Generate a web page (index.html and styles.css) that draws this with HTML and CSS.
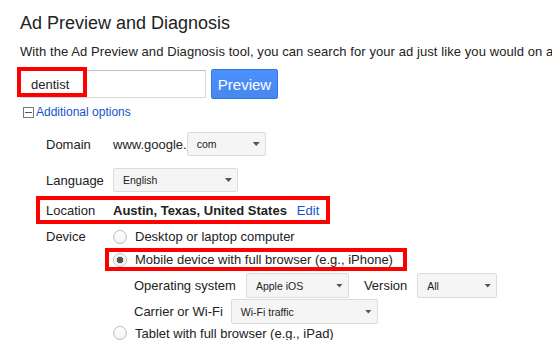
FILE: index.html
```html
<!DOCTYPE html>
<html lang="en">
<head>
<meta charset="utf-8">
<title>Ad Preview and Diagnosis</title>
<link rel="stylesheet" href="styles.css">
</head>
<body>
<div class="page">
  <h1 class="title">Ad Preview and Diagnosis</h1>
  <p class="intro">With the Ad Preview and Diagnosis tool, you can search for your ad just like you would on a</p>
  <div class="search">
    <div class="field">
      <input class="query" type="text" value="dentist">
      <span class="mark mark-query"></span>
    </div>
    <button class="btn" type="button">Preview</button>
  </div>
  <div class="toggle">
    <svg class="minus" width="11" height="11" viewBox="0 0 11 11"><rect x="0.5" y="0.5" width="10" height="10" fill="#fff" stroke="#777"/><line x1="2" y1="5.5" x2="9" y2="5.5" stroke="#555"/></svg>
    <a class="link" href="#">Additional options</a>
  </div>
  <div class="options">
    <div class="row r-domain">
      <span class="label">Domain</span>
      <span class="prefix">www.google.</span>
      <span class="sel w-com">com<i class="caret"></i></span>
    </div>
    <div class="row r-lang">
      <span class="label">Language</span>
      <span class="sel w-lang">English<i class="caret"></i></span>
    </div>
    <div class="row r-loc">
      <span class="label">Location</span>
      <span class="place">Austin, Texas, United States</span>
      <a class="link edit" href="#">Edit</a>
    </div>
    <div class="row r-device">
      <span class="label dlabel">Device</span>
      <div class="group">
        <label class="opt"><input class="radio" type="radio" name="dev"><span>Desktop or laptop computer</span></label>
        <label class="opt opt-mobile"><input class="radio" type="radio" name="dev" checked><span>Mobile device with full browser (e.g., iPhone)</span></label>
        <div class="sub sub-os">
          <span class="slabel">Operating system</span>
          <span class="sel w-os">Apple iOS<i class="caret"></i></span>
          <span class="slabel ver">Version</span>
          <span class="sel w-ver">All<i class="caret"></i></span>
        </div>
        <div class="sub sub-carrier">
          <span class="slabel carrier">Carrier or Wi-Fi</span>
          <span class="sel w-carrier">Wi-Fi traffic<i class="caret"></i></span>
        </div>
        <label class="opt opt-tablet"><input class="radio" type="radio" name="dev"><span>Tablet with full browser (e.g., iPad)</span></label>
      </div>
    </div>
  </div>
</div>
</body>
</html>
```
FILE: styles.css
```css
body {
  margin: 0;
  font-family: "Liberation Sans", Arial, sans-serif;
  color: #222;
  background: #fff;
  overflow: hidden;
}
.page {
  padding-left: 20px;
  white-space: nowrap;
}
.title {
  margin: 12px 0 0;
  font-size: 18px;
  line-height: 22px;
  font-weight: normal;
  color: #222;
}
.intro {
  margin: 10px 0 0;
  font-size: 13px;
  line-height: 16px;
  letter-spacing: 0.08px;
}
.search {
  display: flex;
  align-items: center;
  gap: 5px;
  margin-top: 9px;
  height: 30px;
}
.field {
  position: relative;
  height: 28px;
}
.query {
  box-sizing: border-box;
  width: 186px;
  height: 28px;
  margin: 0;
  border: 1px solid #d9d9d9;
  border-top-color: #c0c0c0;
  padding: 0 0 0 10px;
  font: 13px "Liberation Sans", Arial, sans-serif;
  color: #222;
  outline: none;
}
.mark {
  position: absolute;
  box-sizing: border-box;
  border: 4px solid #f00;
}
.mark-query {
  left: -3px;
  top: -3px;
  width: 70px;
  height: 30px;
}
.btn {
  box-sizing: border-box;
  height: 30px;
  width: 67px;
  padding: 0;
  border: 1px solid #3079ed;
  border-radius: 2px;
  background: linear-gradient(#4d90fe, #4787ed);
  color: #fff;
  font: 15px "Liberation Sans", Arial, sans-serif;
}
.toggle {
  display: flex;
  align-items: center;
  gap: 2px;
  height: 16px;
  margin-top: 5px;
  padding-left: 3px;
  font-size: 12px;
}
.minus { display: block; }
.link {
  color: #15c;
  text-decoration: none;
}
.options {
  margin-top: 12px;
  padding-left: 16px;
  font-size: 13px;
}
.row {
  display: flex;
  align-items: center;
  padding-left: 10px;
}
.label {
  flex: none;
  width: 67px;
}
.r-domain { height: 24px; }
.r-lang { height: 24px; margin-top: 12px; }
.r-loc {
  box-sizing: border-box;
  width: fit-content;
  height: 28px;
  margin-top: 4px;
  border: 4px solid #f00;
  padding: 0 7px 0 6px;
}
.place { font-weight: bold; }
.edit { margin-left: 10px; }
.r-device {
  align-items: flex-start;
  margin-top: 4px;
}
.dlabel {
  width: 59px;
  line-height: 17px;
}
.group {
  display: flex;
  flex-direction: column;
  align-items: flex-start;
}
.opt {
  display: flex;
  align-items: center;
  gap: 8px;
  height: 17px;
  padding-left: 8px;
}
.opt-mobile {
  box-sizing: border-box;
  height: 23px;
  margin-top: 3px;
  border: 4px solid #f00;
  padding: 0 10px 0 4px;
}
.opt-tablet {
  height: 14px;
  margin-top: 2px;
}
.radio {
  appearance: none;
  -webkit-appearance: none;
  box-sizing: border-box;
  flex: none;
  width: 14px;
  height: 14px;
  margin: 0;
  border: 1px solid #bdbdbd;
  border-radius: 50%;
  background: linear-gradient(#fff, #f3f3f3);
}
.radio:checked {
  background: radial-gradient(circle, #555 0, #555 3px, #e9e9e9 3.6px, #fff 6px);
}
.sub {
  display: flex;
  align-items: center;
  height: 25px;
  padding-left: 29px;
}
.sub-os { margin-top: 2px; }
.sub-carrier { margin-top: 1px; }
.slabel { margin-right: 10px; }
.carrier { margin-right: 8px; }
.ver { margin-left: 15px; }
.sel {
  display: flex;
  align-items: center;
  box-sizing: border-box;
  height: 24px;
  border: 1px solid #dcdcdc;
  border-radius: 2px;
  background: #f5f5f5;
  padding: 0 5px 0 9px;
  font-size: 10.5px;
  color: #222;
}
.sub .sel { height: 25px; }
.caret {
  margin-left: auto;
  width: 7px;
  height: 4px;
  background: #555;
  clip-path: polygon(0 0, 100% 0, 50% 100%);
}
.w-com { width: 79px; }
.w-lang { width: 125px; }
.w-os { width: 103px; }
.w-ver { width: 80px; }
.w-carrier { width: 147px; }
```
